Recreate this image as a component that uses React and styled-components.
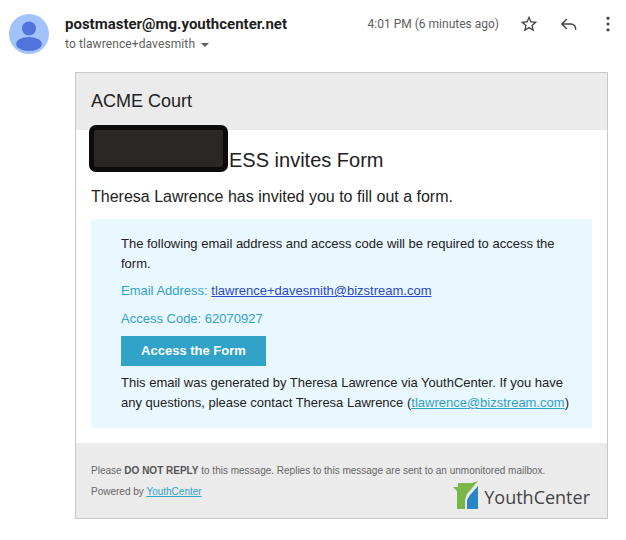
import React from "react";
import styled, { createGlobalStyle } from "styled-components";

const GlobalStyle = createGlobalStyle`
  html, body {
    margin: 0;
    padding: 0;
    background: #fff;
    width: 626px;
    height: 540px;
    overflow: hidden;
  }
`;

const App = () => (
  <Page>
    <GlobalStyle />
    <MailHeader>
      <Avatar>
        <svg width="40" height="40" viewBox="0 0 40 40">
          <circle cx="20" cy="20" r="20" fill="#a1c2fa" />
          <circle cx="20" cy="14.5" r="7" fill="#4f74dc" />
          <ellipse cx="20" cy="30" rx="12.8" ry="7" fill="#4f74dc" />
        </svg>
      </Avatar>
      <SenderBlock>
        <Sender>postmaster@mg.youthcenter.net</Sender>
        <Recipient>
          to tlawrence+davesmith
          <Caret />
        </Recipient>
      </SenderBlock>
      <Meta>
        <Time>4:01 PM (6 minutes ago)</Time>
        <IconSlot>
          <svg width="20" height="20" viewBox="0 0 24 24" fill="#444746">
            <path d="M22 9.24l-7.19-.62L12 2 9.19 8.63 2 9.24l5.46 4.73L5.82 21 12 17.27 18.18 21l-1.63-7.03L22 9.24zM12 15.4l-3.76 2.27 1-4.28-3.32-2.88 4.38-.38L12 6.1l1.71 4.04 4.38.38-3.32 2.88 1 4.28L12 15.4z" />
          </svg>
        </IconSlot>
        <IconSlot>
          <svg width="20" height="20" viewBox="0 0 24 24" fill="none" stroke="#444746" strokeWidth="1.8">
            <path d="M9.5 6 L3.5 12 L9.5 18" />
            <path d="M3.5 12 H14 C17.5 12 20 14.5 20 19" />
          </svg>
        </IconSlot>
        <IconSlot>
          <svg width="20" height="20" viewBox="0 0 24 24" fill="#444746">
            <circle cx="12" cy="5" r="1.9" />
            <circle cx="12" cy="12" r="1.9" />
            <circle cx="12" cy="19" r="1.9" />
          </svg>
        </IconSlot>
      </Meta>
    </MailHeader>

    <Card>
      <CardHeader>ACME Court</CardHeader>
      <CardBody>
        <Title>
          <Redacted />
          ESS invites Form
        </Title>
        <Lead>Theresa Lawrence has invited you to fill out a form.</Lead>
        <Notice>
          <NoticeText>
            The following email address and access code will be required to access the form.
          </NoticeText>
          <Detail>
            Email Address: <MailLink href="#">tlawrence+davesmith@bizstream.com</MailLink>
          </Detail>
          <Detail>Access Code: 62070927</Detail>
          <AccessButton href="#">Access the Form</AccessButton>
          <NoticeText>
            This email was generated by Theresa Lawrence via YouthCenter. If you have any questions, please contact Theresa Lawrence (<ContactLink href="#">tlawrence@bizstream.com</ContactLink>)
          </NoticeText>
        </Notice>
      </CardBody>
      <CardFooter>
        <FooterLine>
          Please <strong>DO NOT REPLY</strong> to this message. Replies to this message are sent to an unmonitored mailbox.
        </FooterLine>
        <PoweredRow>
          <FooterLine>
            Powered by <ContactLink href="#">YouthCenter</ContactLink>
          </FooterLine>
          <Logo>
            <svg width="26" height="28" viewBox="0 0 26 28">
              <polygon points="5,2 19,2 25,0 14,13 12,19 12,28 4,28 4,10 0,6 5,6" fill="#7ab648" />
              <polygon points="14,28 14,19 17,14 25,5 25,28" fill="#2b86c5" />
            </svg>
            <LogoText>YouthCenter</LogoText>
          </Logo>
        </PoweredRow>
      </CardFooter>
    </Card>
  </Page>
);

const Page = styled.div`
  width: 626px;
  height: 540px;
  box-sizing: border-box;
  padding-top: 14px;
  font-family: "Liberation Sans", Arial, sans-serif;
`;

const MailHeader = styled.div`
  display: flex;
  align-items: flex-start;
  height: 58px;
  padding: 0 9px;
`;

const Avatar = styled.div`
  width: 40px;
  height: 40px;
  flex: none;
  svg {
    display: block;
  }
`;

const SenderBlock = styled.div`
  margin-left: 16px;
  font-family: Roboto, sans-serif;
`;

const Sender = styled.div`
  font-size: 15px;
  line-height: 20px;
  font-weight: 700;
  color: #1f1f1f;
`;

const Recipient = styled.div`
  display: flex;
  align-items: center;
  font-size: 12px;
  line-height: 20px;
  letter-spacing: 0.1px;
  color: #5e5e5e;
`;

const Caret = styled.span`
  width: 0;
  height: 0;
  margin: 1px 0 0 6px;
  border-left: 4px solid transparent;
  border-right: 4px solid transparent;
  border-top: 4px solid #5e5e5e;
`;

const Meta = styled.div`
  display: flex;
  align-items: center;
  margin-left: auto;
  height: 20px;
  font-family: Roboto, sans-serif;
`;

const Time = styled.span`
  font-size: 12px;
  color: #5e5e5e;
  margin-right: 10px;
`;

const IconSlot = styled.span`
  display: flex;
  justify-content: center;
  width: 40px;
  &:last-child {
    width: 38px;
    margin-right: -10px;
  }
`;

const Card = styled.div`
  width: 533px;
  box-sizing: border-box;
  margin-left: 75px;
  border: 1px solid #c8c8c8;
`;

const CardHeader = styled.div`
  height: 57px;
  box-sizing: border-box;
  padding: 18px 15px 0;
  background: #ebebeb;
  font-size: 18px;
  line-height: 20px;
  color: #222;
`;

const CardBody = styled.div`
  padding: 0 15px 15px;
  background: #fff;
`;

const Title = styled.div`
  position: relative;
  height: 43px;
  padding: 18px 0 0 138px;
  box-sizing: border-box;
  font-size: 20px;
  line-height: 24px;
  color: #222;
`;

const Redacted = styled.div`
  position: absolute;
  left: -2px;
  top: -5px;
  width: 139px;
  height: 47px;
  box-sizing: border-box;
  border: 5px solid #0c0a0a;
  border-radius: 7px;
  background: #2b2727;
`;

const Lead = styled.div`
  margin-top: 13px;
  font-size: 16px;
  line-height: 22px;
  color: #222;
`;

const Notice = styled.div`
  margin-top: 11px;
  padding: 15px 20px 15px 30px;
  height: 209px;
  box-sizing: border-box;
  background: #e9f7fe;
`;

const NoticeText = styled.div`
  font-size: 13px;
  line-height: 20px;
  color: #222;
`;

const Detail = styled.div`
  margin-top: 7px;
  font-size: 13px;
  line-height: 20px;
  color: #31a3c8;
  & + & {
    margin-top: 8px;
  }
`;

const MailLink = styled.a`
  color: #2b48c8;
`;

const ContactLink = styled.a`
  color: #31a3c8;
`;

const AccessButton = styled.a`
  display: block;
  width: 145px;
  height: 30px;
  margin: 7px 0 7px;
  background: #31a3c8;
  color: #fff;
  font-size: 13px;
  font-weight: 700;
  line-height: 30px;
  text-align: center;
  text-decoration: none;
`;

const CardFooter = styled.div`
  height: 75px;
  box-sizing: border-box;
  padding: 19px 15px 0;
  background: #ebebeb;
`;

const FooterLine = styled.div`
  font-size: 10px;
  line-height: 17px;
  color: #666;
  strong {
    color: #555;
  }
`;

const PoweredRow = styled.div`
  display: flex;
  justify-content: space-between;
  align-items: flex-start;
  margin-top: 4px;
`;

const Logo = styled.div`
  display: flex;
  align-items: center;
  margin: -2px 2px 0 0;
`;

const LogoText = styled.span`
  margin: 4px 0 0 5px;
  font-family: "Open Sans", sans-serif;
  font-size: 18px;
  color: #444;
`;

export default App;
